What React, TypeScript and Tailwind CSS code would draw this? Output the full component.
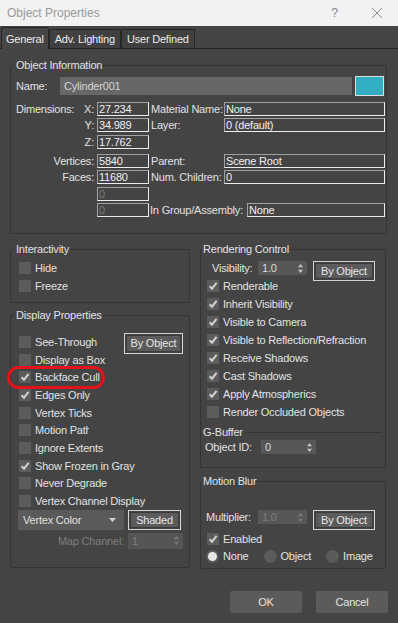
import React from "react";

const Check = ({ on }: { on?: boolean }) => (
  <span className="flex h-[12px] w-[12px] shrink-0 items-center justify-center bg-[#5c5c5c]">
    {on && (
      <svg width="10" height="10" viewBox="0 0 10 10">
        <path d="M1.6 5.2 L4 7.7 L8.6 1.9" stroke="#d2d2d2" strokeWidth="2" fill="none" />
      </svg>
    )}
  </span>
);

const CheckRow = ({ label, on, h = "h-[18px]" }: { label: string; on?: boolean; h?: string }) => (
  <div className={`flex items-center gap-[4px] ${h}`}>
    <Check on={on} />
    <span className="whitespace-nowrap">{label}</span>
  </div>
);

const Box = ({ v, w, dim }: { v?: string; w: string; dim?: boolean }) => (
  <div
    className={`flex h-[14px] shrink-0 items-center border border-t-[#a0a0a0] border-l-[#a0a0a0] border-r-[#ececec] border-b-[#ececec] pl-[1px] leading-[12px] ${w} ${
      dim ? "text-[#7a7a7a]" : "text-[#f0f0f0]"
    }`}
  >
    {v}
  </div>
);

const Arrows = ({ dim }: { dim?: boolean }) => (
  <svg width="5" height="9" viewBox="0 0 5 9">
    <path d="M2.5 0 L5 3.2 H0Z M0 5.8 H5 L2.5 9Z" fill={dim ? "#7a7a7a" : "#c4c4c4"} />
  </svg>
);

const Spinner = ({ v, w, dim }: { v: string; w: string; dim?: boolean }) => (
  <div
    className={`flex h-[14px] shrink-0 items-center justify-between bg-[#575757] pl-[4px] pr-[4px] ${w} ${
      dim ? "text-[#7c7c7c]" : "text-[#dcdcdc]"
    }`}
  >
    <span>{v}</span>
    <Arrows dim={dim} />
  </div>
);

const Btn = ({ label, cls }: { label: string; cls: string }) => (
  <div className={`flex shrink-0 border border-[#d2d2d2] p-[1px] ${cls}`}>
    <div className="flex flex-1 items-center justify-center rounded-[2px] border border-[#3c3c3c] bg-[#5b5b5b] text-[#e6e6e6]">
      {label}
    </div>
  </div>
);

const Radio = ({ label, on }: { label: string; on?: boolean }) => (
  <div className="flex items-center gap-[4px]">
    <span className="flex h-[13px] w-[13px] items-center justify-center rounded-full bg-[#5b5b5b]">
      {on && <span className="h-[9px] w-[9px] rounded-full bg-[#e8e8e8]" />}
    </span>
    <span>{label}</span>
  </div>
);

const Legend = ({ children, right }: { children: React.ReactNode; right?: boolean }) => (
  <legend className={`leading-[14px] ${right ? "ml-[1px] px-[1px]" : "ml-[4px] px-[1px]"}`}>{children}</legend>
);

export default function App() {
  return (
    <div className="flex h-[623px] w-[398px] flex-col bg-[#444444] font-['Liberation_Sans',Arial,sans-serif] text-[11px] leading-[14px] tracking-[-0.2px] text-[#e2e2e2]">
      {/* title bar */}
      <div className="flex h-[26px] items-center bg-[#f2f2f2] pl-[7px] text-[12px] tracking-normal text-[#999999]">
        <span className="flex-1">Object Properties</span>
        <span className="w-[40px] text-[13px] text-[#8c8c8c]">?</span>
        <svg width="12" height="12" viewBox="0 0 12 12" className="mr-[15px]">
          <path d="M1 1 L11 11 M11 1 L1 11" stroke="#8a8a8a" strokeWidth="1" />
        </svg>
      </div>

      {/* tabs */}
      <div className="flex h-[23px] items-end border-b border-[#1f1f1f] pl-[1px] text-[#ececec]">
        <div className="-mb-[1px] flex h-[22px] items-center rounded-t-[3px] border border-b-0 border-[#262626] bg-[#464646] px-[4px]">
          General
        </div>
        <div className="flex h-[19px] items-center rounded-t-[2px] border border-b-0 border-[#262626] bg-[#404040] px-[5px]">
          Adv. Lighting
        </div>
        <div className="flex h-[19px] items-center rounded-t-[2px] border border-b-0 border-[#262626] bg-[#404040] px-[5px]">
          User Defined
        </div>
      </div>

      {/* object information */}
      <fieldset className="mx-[10px] mt-[9px] w-[377px] rounded-[2px] border border-[#343434] pb-[16px]">
        <Legend>Object Information</Legend>
        <div className="mt-[4px] flex items-center pl-[5px]">
          <span className="w-[44px]">Name:</span>
          <div className="flex h-[18px] w-[292px] items-center bg-[#676767] pl-[4px] text-[#d4d4d4]">Cylinder001</div>
          <div className="ml-[3px] h-[20px] w-[29px] border border-[#dcdcdc] bg-[#33adc2]" />
        </div>

        <div className="mt-[6px] flex h-[14px] items-center whitespace-nowrap">
          <div className="flex w-[86px] justify-between pl-[5px] pr-[3px]">
            <span>Dimensions:</span>
            <span>X:</span>
          </div>
          <Box v="27.234" w="w-[52px]" />
          <span className="w-[75px] pl-[2px]">Material Name:</span>
          <Box v="None" w="w-[161px]" />
        </div>
        <div className="mt-[2px] flex h-[14px] items-center whitespace-nowrap">
          <span className="w-[86px] pr-[3px] text-right">Y:</span>
          <Box v="34.989" w="w-[52px]" />
          <span className="w-[75px] pl-[2px]">Layer:</span>
          <Box v="0 (default)" w="w-[161px]" />
        </div>
        <div className="mt-[3px] flex h-[14px] items-center">
          <span className="w-[86px] pr-[3px] text-right">Z:</span>
          <Box v="17.762" w="w-[52px]" />
        </div>
        <div className="mt-[5px] flex h-[14px] items-center whitespace-nowrap">
          <span className="w-[86px] pr-[3px] text-right">Vertices:</span>
          <Box v="5840" w="w-[52px]" />
          <span className="w-[75px] pl-[2px]">Parent:</span>
          <Box v="Scene Root" w="w-[161px]" />
        </div>
        <div className="mt-[2px] flex h-[14px] items-center whitespace-nowrap">
          <span className="w-[86px] pr-[3px] text-right">Faces:</span>
          <Box v="11680" w="w-[52px]" />
          <span className="w-[75px] pl-[2px]">Num. Children:</span>
          <Box v="0" w="w-[161px]" />
        </div>
        <div className="mt-[3px] flex h-[14px] items-center pl-[86px]">
          <Box v="0" w="w-[52px]" dim />
        </div>
        <div className="mt-[2px] flex h-[14px] items-center whitespace-nowrap pl-[86px]">
          <Box v="0" w="w-[52px]" dim />
          <span className="w-[98px] pl-[1px]">In Group/Assembly:</span>
          <Box v="None" w="w-[138px]" />
        </div>
      </fieldset>

      {/* two columns */}
      <div className="mt-[8px] flex gap-[10px] px-[10px]">
        <div className="flex w-[180px] flex-col">
          <fieldset className="rounded-[2px] border border-[#343434] pb-[7px]">
            <Legend>Interactivity</Legend>
            <div className="mt-[3px] pl-[8px]">
              <CheckRow label="Hide" />
              <CheckRow label="Freeze" />
            </div>
          </fieldset>

          <fieldset className="mt-[5px] rounded-[2px] border border-[#343434] pb-[18px]">
            <Legend>Display Properties</Legend>
            <div className="pl-[8px]">
              <div className="mt-[11px]">
                <div className="flex h-[17.7px] items-center justify-between pr-[6px]">
                  <CheckRow label="See-Through" h="h-[17.7px]" />
                  <Btn label="By Object" cls="h-[21px] w-[59px] mt-[3px]" />
                </div>
                <CheckRow label="Display as Box" h="h-[17.7px]" />
                <div className="relative">
                  <CheckRow label="Backface Cull" on h="h-[17.7px]" />
                  <span className="absolute -left-[12px] -top-[2px] h-[23px] w-[98px] rounded-[12px] border-[3px] border-[#e3131b]" />
                </div>
                <CheckRow label="Edges Only" on h="h-[17.7px]" />
                <CheckRow label="Vertex Ticks" h="h-[17.7px]" />
                <div className="flex h-[17.7px] items-center gap-[4px]">
                  <Check />
                  <span className="w-[54px] overflow-hidden whitespace-nowrap">Motion Path</span>
                </div>
                <CheckRow label="Ignore Extents" h="h-[17.7px]" />
                <CheckRow label="Show Frozen in Gray" on h="h-[17.7px]" />
                <CheckRow label="Never Degrade" h="h-[17.7px]" />
                <CheckRow label="Vertex Channel Display" h="h-[17.7px]" />
              </div>
              <div className="-ml-[1px] flex h-[20px] items-center gap-[4px]">
                <div className="flex h-[20px] w-[106px] items-center justify-between bg-[#5a5a5a] pl-[5px] pr-[8px] text-[#e0e0e0]">
                  <span>Vertex Color</span>
                  <svg width="7" height="4" viewBox="0 0 7 4">
                    <path d="M0 0 H7 L3.5 4Z" fill="#d0d0d0" />
                  </svg>
                </div>
                <Btn label="Shaded" cls="h-[20px] w-[53px]" />
              </div>
              <div className="mt-[3px] flex h-[16px] items-center justify-end gap-[4px] pr-[6px] text-[#7e7e7e]">
                <span>Map Channel:</span>
                <div className="flex h-[16px] w-[55px] items-center justify-between bg-[#555555] pl-[4px] pr-[4px]">
                  <span>1</span>
                  <Arrows dim />
                </div>
              </div>
            </div>
          </fieldset>
        </div>

        <div className="flex w-[186px] flex-col">
          <fieldset className="rounded-[2px] border border-[#343434] pb-[13px]">
            <Legend right>Rendering Control</Legend>
            <div className="mt-[5px] flex h-[16px] items-start pl-[11px]">
              <span className="w-[46px] leading-[14px]">Visibility:</span>
              <Spinner v="1.0" w="w-[49px]" />
              <Btn label="By Object" cls="ml-[6px] h-[20px] w-[62px]" />
            </div>
            <div className="pl-[6px]">
              <CheckRow label="Renderable" on />
              <CheckRow label="Inherit Visibility" on />
              <CheckRow label="Visible to Camera" on />
              <CheckRow label="Visible to Reflection/Refraction" on />
              <CheckRow label="Receive Shadows" on />
              <CheckRow label="Cast Shadows" on />
              <CheckRow label="Apply Atmospherics" on />
              <CheckRow label="Render Occluded Objects" />
            </div>
            <fieldset className="ml-[2px] mr-[3px] mt-[4px] border-t border-[#343434]">
              <legend className="pr-[3px] leading-[14px]">G-Buffer</legend>
              <div className="mt-[1px] flex h-[14px] items-center pl-[2px]">
                <span className="w-[56px]">Object ID:</span>
                <Spinner v="0" w="w-[55px]" />
              </div>
            </fieldset>
          </fieldset>

          <fieldset className="mt-[6px] rounded-[2px] border border-[#343434] pb-[3px]">
            <Legend right>Motion Blur</Legend>
            <div className="pl-[5px]">
              <div className="mt-[22px] flex h-[20px] items-start">
                <span className="w-[52px]">Multiplier:</span>
                <Spinner v="1.0" w="w-[49px]" dim />
                <Btn label="By Object" cls="ml-[6px] h-[20px] w-[62px]" />
              </div>
              <div className="pl-[1px]">
                <CheckRow label="Enabled" on h="h-[17px]" />
              </div>
              <div className="flex h-[18px] items-center gap-[15px]">
                <Radio label="None" on />
                <Radio label="Object" />
                <Radio label="Image" />
              </div>
            </div>
          </fieldset>
        </div>
      </div>

      {/* buttons */}
      <div className="mt-[22px] flex justify-end gap-[14px] pr-[10px]">
        <div className="flex h-[22px] w-[72px] items-center justify-center rounded-[2px] bg-[#5b5b5b] text-[#e4e4e4]">OK</div>
        <div className="flex h-[22px] w-[72px] items-center justify-center rounded-[2px] bg-[#5b5b5b] text-[#e4e4e4]">Cancel</div>
      </div>
    </div>
  );
}
